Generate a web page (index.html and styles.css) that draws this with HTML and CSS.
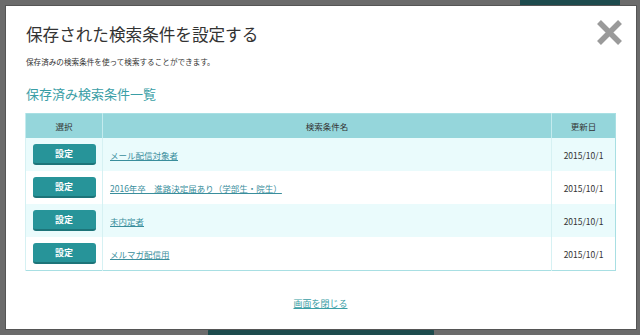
FILE: index.html
```html
<!DOCTYPE html>
<html lang="ja">
<head>
    <meta charset="utf-8">
    <title>保存された検索条件を設定する</title>
    <link rel="stylesheet" href="styles.css">
</head>
<body>
    <div class="page-bar page-bar-top"></div>
    <div class="page-bar page-bar-bottom"></div>
    <div class="modal">
        <a href="#" class="modal-close" aria-label="閉じる">
            <svg width="27" height="27" viewBox="0 0 27 27">
                <path d="M3 3 L24 24 M24 3 L3 24" stroke="#9a9a9a" stroke-width="5.5" fill="none"/>
            </svg>
        </a>
        <h1 class="modal-title">保存された検索条件を設定する</h1>
        <p class="modal-lead">保存済みの検索条件を使って検索することができます。</p>
        <h2 class="section-title">保存済み検索条件一覧</h2>
        <table class="saved-table">
            <thead>
                <tr>
                    <th class="col-select">選択</th>
                    <th class="col-name">検索条件名</th>
                    <th class="col-date">更新日</th>
                </tr>
            </thead>
            <tbody>
                <tr>
                    <td class="col-select"><button class="btn-set">設定</button></td>
                    <td class="col-name"><a href="#">メール配信対象者</a></td>
                    <td class="col-date">2015/10/1</td>
                </tr>
                <tr>
                    <td class="col-select"><button class="btn-set">設定</button></td>
                    <td class="col-name"><a href="#">2016年卒　進路決定届あり（学部生・院生）</a></td>
                    <td class="col-date">2015/10/1</td>
                </tr>
                <tr>
                    <td class="col-select"><button class="btn-set">設定</button></td>
                    <td class="col-name"><a href="#">未内定者</a></td>
                    <td class="col-date">2015/10/1</td>
                </tr>
                <tr>
                    <td class="col-select"><button class="btn-set">設定</button></td>
                    <td class="col-name"><a href="#">メルマガ配信用</a></td>
                    <td class="col-date">2015/10/1</td>
                </tr>
            </tbody>
        </table>
        <div class="modal-footer">
            <a href="#" class="close-link">画面を閉じる</a>
        </div>
    </div>
</body>
</html>
```

FILE: styles.css
```css
html, body {
    height: 100%;
}
body {
    font-family: "Noto Sans CJK JP", "Noto Sans", sans-serif;
    margin: 0;
    padding: 6px 4px 6px 6px;
    box-sizing: border-box;
    background-color: #6b6b6b;
    color: #333;
    position: relative;
    overflow: hidden;
}
.page-bar {
    position: absolute;
    background: #1d4b4d;
}
.page-bar-top {
    left: 520px;
    top: 0;
    width: 100px;
    height: 5px;
}
.page-bar-bottom {
    left: 208px;
    bottom: 0;
    width: 226px;
    height: 6px;
    border-radius: 2px 2px 0 0;
}
.modal {
    position: relative;
    background: white;
    width: 630px;
    height: 323px;
    box-sizing: border-box;
    padding: 14px 20px 0 19px;
    box-shadow: 0 0 0 1px #555;
}
.modal-close {
    position: absolute;
    top: 13px;
    right: 13px;
    line-height: 0;
}
.modal-title {
    font-size: 16.6px;
    font-weight: normal;
    margin: 0 0 0 1px;
    line-height: 28px;
}
.modal-lead {
    font-size: 7.6px;
    line-height: 14px;
    margin: 7px 0 0 1px;
}
.section-title {
    font-size: 13px;
    font-weight: normal;
    color: #3a9ea6;
    line-height: 20px;
    margin: 15px 0 0 1px;
}
.saved-table {
    width: 591px;
    margin-top: 9px;
    border-collapse: collapse;
    font-size: 8.5px;
    border: 1px solid #a8dfe3;
}
.saved-table th {
    background: #95d6db;
    font-weight: normal;
    height: 24px;
    padding: 0;
    border-left: 1px solid #c4ebee;
}
.saved-table td {
    height: 33px;
    padding: 0;
    border-left: 1px solid #d6f1f3;
}
.saved-table tbody tr:nth-child(odd) td {
    background: #eafbfc;
}
.saved-table .col-select {
    width: 76px;
    text-align: center;
}
.saved-table td.col-name {
    padding-left: 7px;
}
.saved-table .col-date {
    width: 63px;
    text-align: center;
}
.saved-table a {
    color: #3a8e9c;
}
.btn-set {
    font-family: inherit;
    background: #279499;
    color: white;
    font-size: 9px;
    font-weight: bold;
    border: none;
    border-bottom: 2px solid #1d7479;
    border-radius: 3px;
    width: 63px;
    height: 21px;
    padding: 0;
    display: block;
    margin: 0 auto;
}
.modal-footer {
    text-align: center;
    margin-top: 26px;
    font-size: 9px;
}
.close-link {
    color: #3a9ea6;
}
```
